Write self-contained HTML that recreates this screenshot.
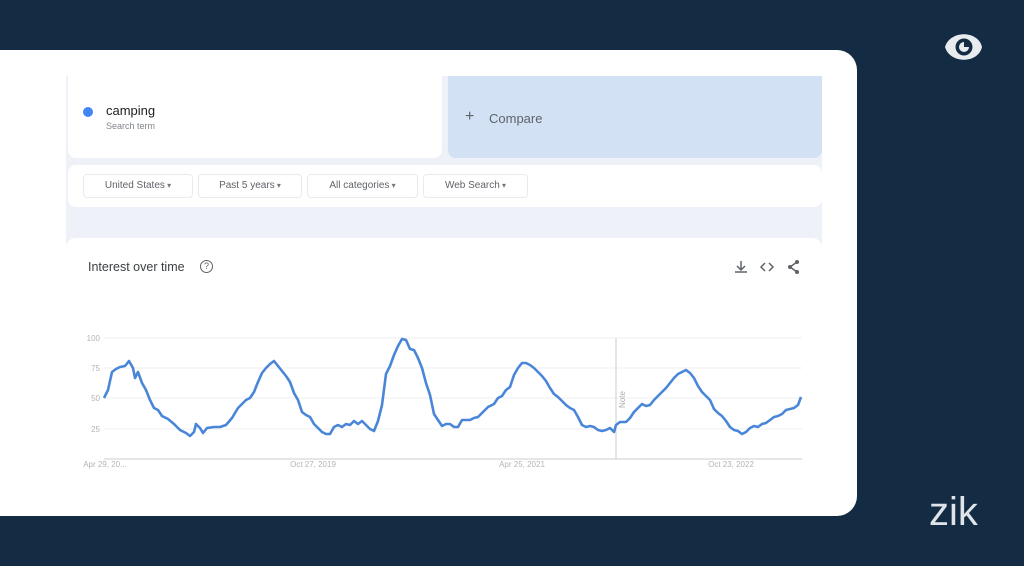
<!DOCTYPE html>
<html><head><meta charset="utf-8"><style>
*{margin:0;padding:0;box-sizing:border-box}
body{width:1024px;height:566px;background:#142c43;position:relative;overflow:hidden;font-family:"Liberation Sans",Arial,sans-serif}
.card{position:absolute;left:0;top:50px;width:857px;height:466px;background:#fff;border-radius:0 20px 20px 0}
.gray{position:absolute;left:66px;top:76px;width:756px;height:414px;background:#eef2f8}
.term{position:absolute;left:68px;top:76px;width:374px;height:82px;background:#fff;border-radius:0 0 8px 8px}
.cmp{position:absolute;left:448px;top:76px;width:374px;height:82px;background:#d2e1f4;border-radius:0 0 8px 8px;color:#5f6368;font-size:13px}
.filters{position:absolute;left:68px;top:165px;width:754px;height:42px;background:#fff;border-radius:8px}
.f{position:absolute;top:174px;height:24px;border:1px solid #e8eaed;border-radius:4px;font-size:10px;color:#5f6368;line-height:22px;text-align:center;background:#fff}
.f:after{content:"  ▾";font-size:8px;color:#777}
.chart{position:absolute;left:66px;top:238px;width:756px;height:260px;background:#fff;border-radius:10px 10px 0 0}
</style></head><body>
<div class="card"></div>
<div class="gray"></div>
<div class="term">
 <div style="position:absolute;left:15px;top:31px;width:10px;height:10px;border-radius:50%;background:#4285f4"></div>
 <div style="position:absolute;left:38px;top:27px;font-size:13px;color:#202124">camping</div>
 <div style="position:absolute;left:38px;top:45px;font-size:9px;color:#80868b">Search term</div>
</div>
<div class="cmp"><span style="position:absolute;left:17px;top:32px;font-size:16px">+</span><span style="position:absolute;left:41px;top:35px">Compare</span></div>
<div class="filters"></div>
<div class="f" style="left:83px;width:110px">United States</div>
<div class="f" style="left:198px;width:104px">Past 5 years</div>
<div class="f" style="left:307px;width:111px">All categories</div>
<div class="f" style="left:423px;width:105px">Web Search</div>
<div class="chart"></div>
<div style="position:absolute;left:88px;top:260px;font-size:12.5px;color:#3c4043">Interest over time</div>
<div style="position:absolute;left:200px;top:260px;width:13px;height:13px;border:1.3px solid #5f6368;border-radius:50%;font-size:9px;color:#5f6368;text-align:center;line-height:11px">?</div>
<svg style="position:absolute;left:0;top:0" width="1024" height="566">
 <g stroke="#5f6368" stroke-width="1.5" fill="none">
  <path d="M741 261v9M737 266l4 4 4-4M735 272h12"/>
  <path d="M765 263l-4 4 4 4M769 263l4 4-4 4"/>
  <path d="M797 262l-7 5 7 5"/>
 </g>
 <circle cx="797" cy="262" r="2" fill="#5f6368"/><circle cx="790" cy="267" r="2" fill="#5f6368"/><circle cx="797" cy="272" r="2" fill="#5f6368"/>
 <g stroke="#efefef" stroke-width="1"><path d="M104 338H802M104 368H802M104 398H802M104 429H802"/></g>
 <path d="M104 459H802" stroke="#ccc"/>
 <path d="M616 338V459" stroke="#ccc"/>
 <text x="625" y="408" transform="rotate(-90 625 408)" font-size="8" fill="#aaa" font-family="Liberation Sans">Note</text>
 <g font-size="8" fill="#b4b4b4" font-family="Liberation Sans" text-anchor="end"><text x="100" y="341">100</text><text x="100" y="371">75</text><text x="100" y="401">50</text><text x="100" y="432">25</text></g>
 <g font-size="8" fill="#b4b4b4" font-family="Liberation Sans" text-anchor="middle"><text x="105" y="467">Apr 29, 20...</text><text x="313" y="467">Oct 27, 2019</text><text x="522" y="467">Apr 25, 2021</text><text x="731" y="467">Oct 23, 2022</text></g>
 <polyline fill="none" stroke="#4a86d8" stroke-width="2.6" stroke-linejoin="round" points="104,398 108,390 112,372 116,369 120,367 125,366 129,361 133,368 135,378 138,372 142,383 146,390 150,400 154,408 158,410 162,416 168,419 174,424 180,430 186,433 190,436 194,432 196,424 200,428 203,433 207,428 214,427 220,427 226,425 232,418 238,408 242,404 246,400 250,398 254,392 258,382 262,373 266,368 270,364 274,361 278,366 282,371 286,376 290,382 294,393 298,400 302,412 306,415 310,417 314,424 318,428 322,432 326,434 330,434 334,427 338,425 342,427 346,424 350,425 354,421 358,424 362,421 366,425 370,429 374,431 378,421 382,405 386,374 390,366 394,355 398,346 402,339 406,340 410,349 414,350 418,358 422,368 426,383 430,395 434,414 438,420 442,426 446,424 450,424 454,427 458,427 462,420 466,420 470,420 474,418 478,417 482,413 488,407 494,404 498,398 502,396 506,390 510,387 514,375 518,368 522,363 526,363 530,365 534,368 538,372 542,376 546,381 550,388 554,394 558,397 562,401 566,405 570,408 574,410 578,417 582,425 586,427 590,426 594,427 598,430 602,431 606,430 610,428 614,432 616,425 620,422 626,422 630,418 634,412 638,408 642,404 646,406 650,405 654,400 658,396 662,392 666,388 670,383 674,378 678,374 682,372 686,370 690,373 694,378 698,386 702,392 706,396 710,400 714,409 718,413 722,416 726,421 730,427 734,430 738,431 742,434 746,432 750,428 754,426 758,427 762,424 766,423 770,420 774,417 778,416 782,414 786,410 790,409 794,408 798,405 801,397"/>
 <path d="M945 47 C950 30 978 30 982 47 C978 64 950 64 945 47Z" fill="#e8ecef"/>
 <circle cx="964" cy="47" r="8.5" fill="#142c43"/>
 <path d="M964 42 A5 5 0 1 0 969 47 L964 47Z" fill="#e8ecef"/>
 <text x="929" y="525" font-size="40" fill="#dfe4e8" font-family="Liberation Sans">zik</text>
</svg>
</body></html>
